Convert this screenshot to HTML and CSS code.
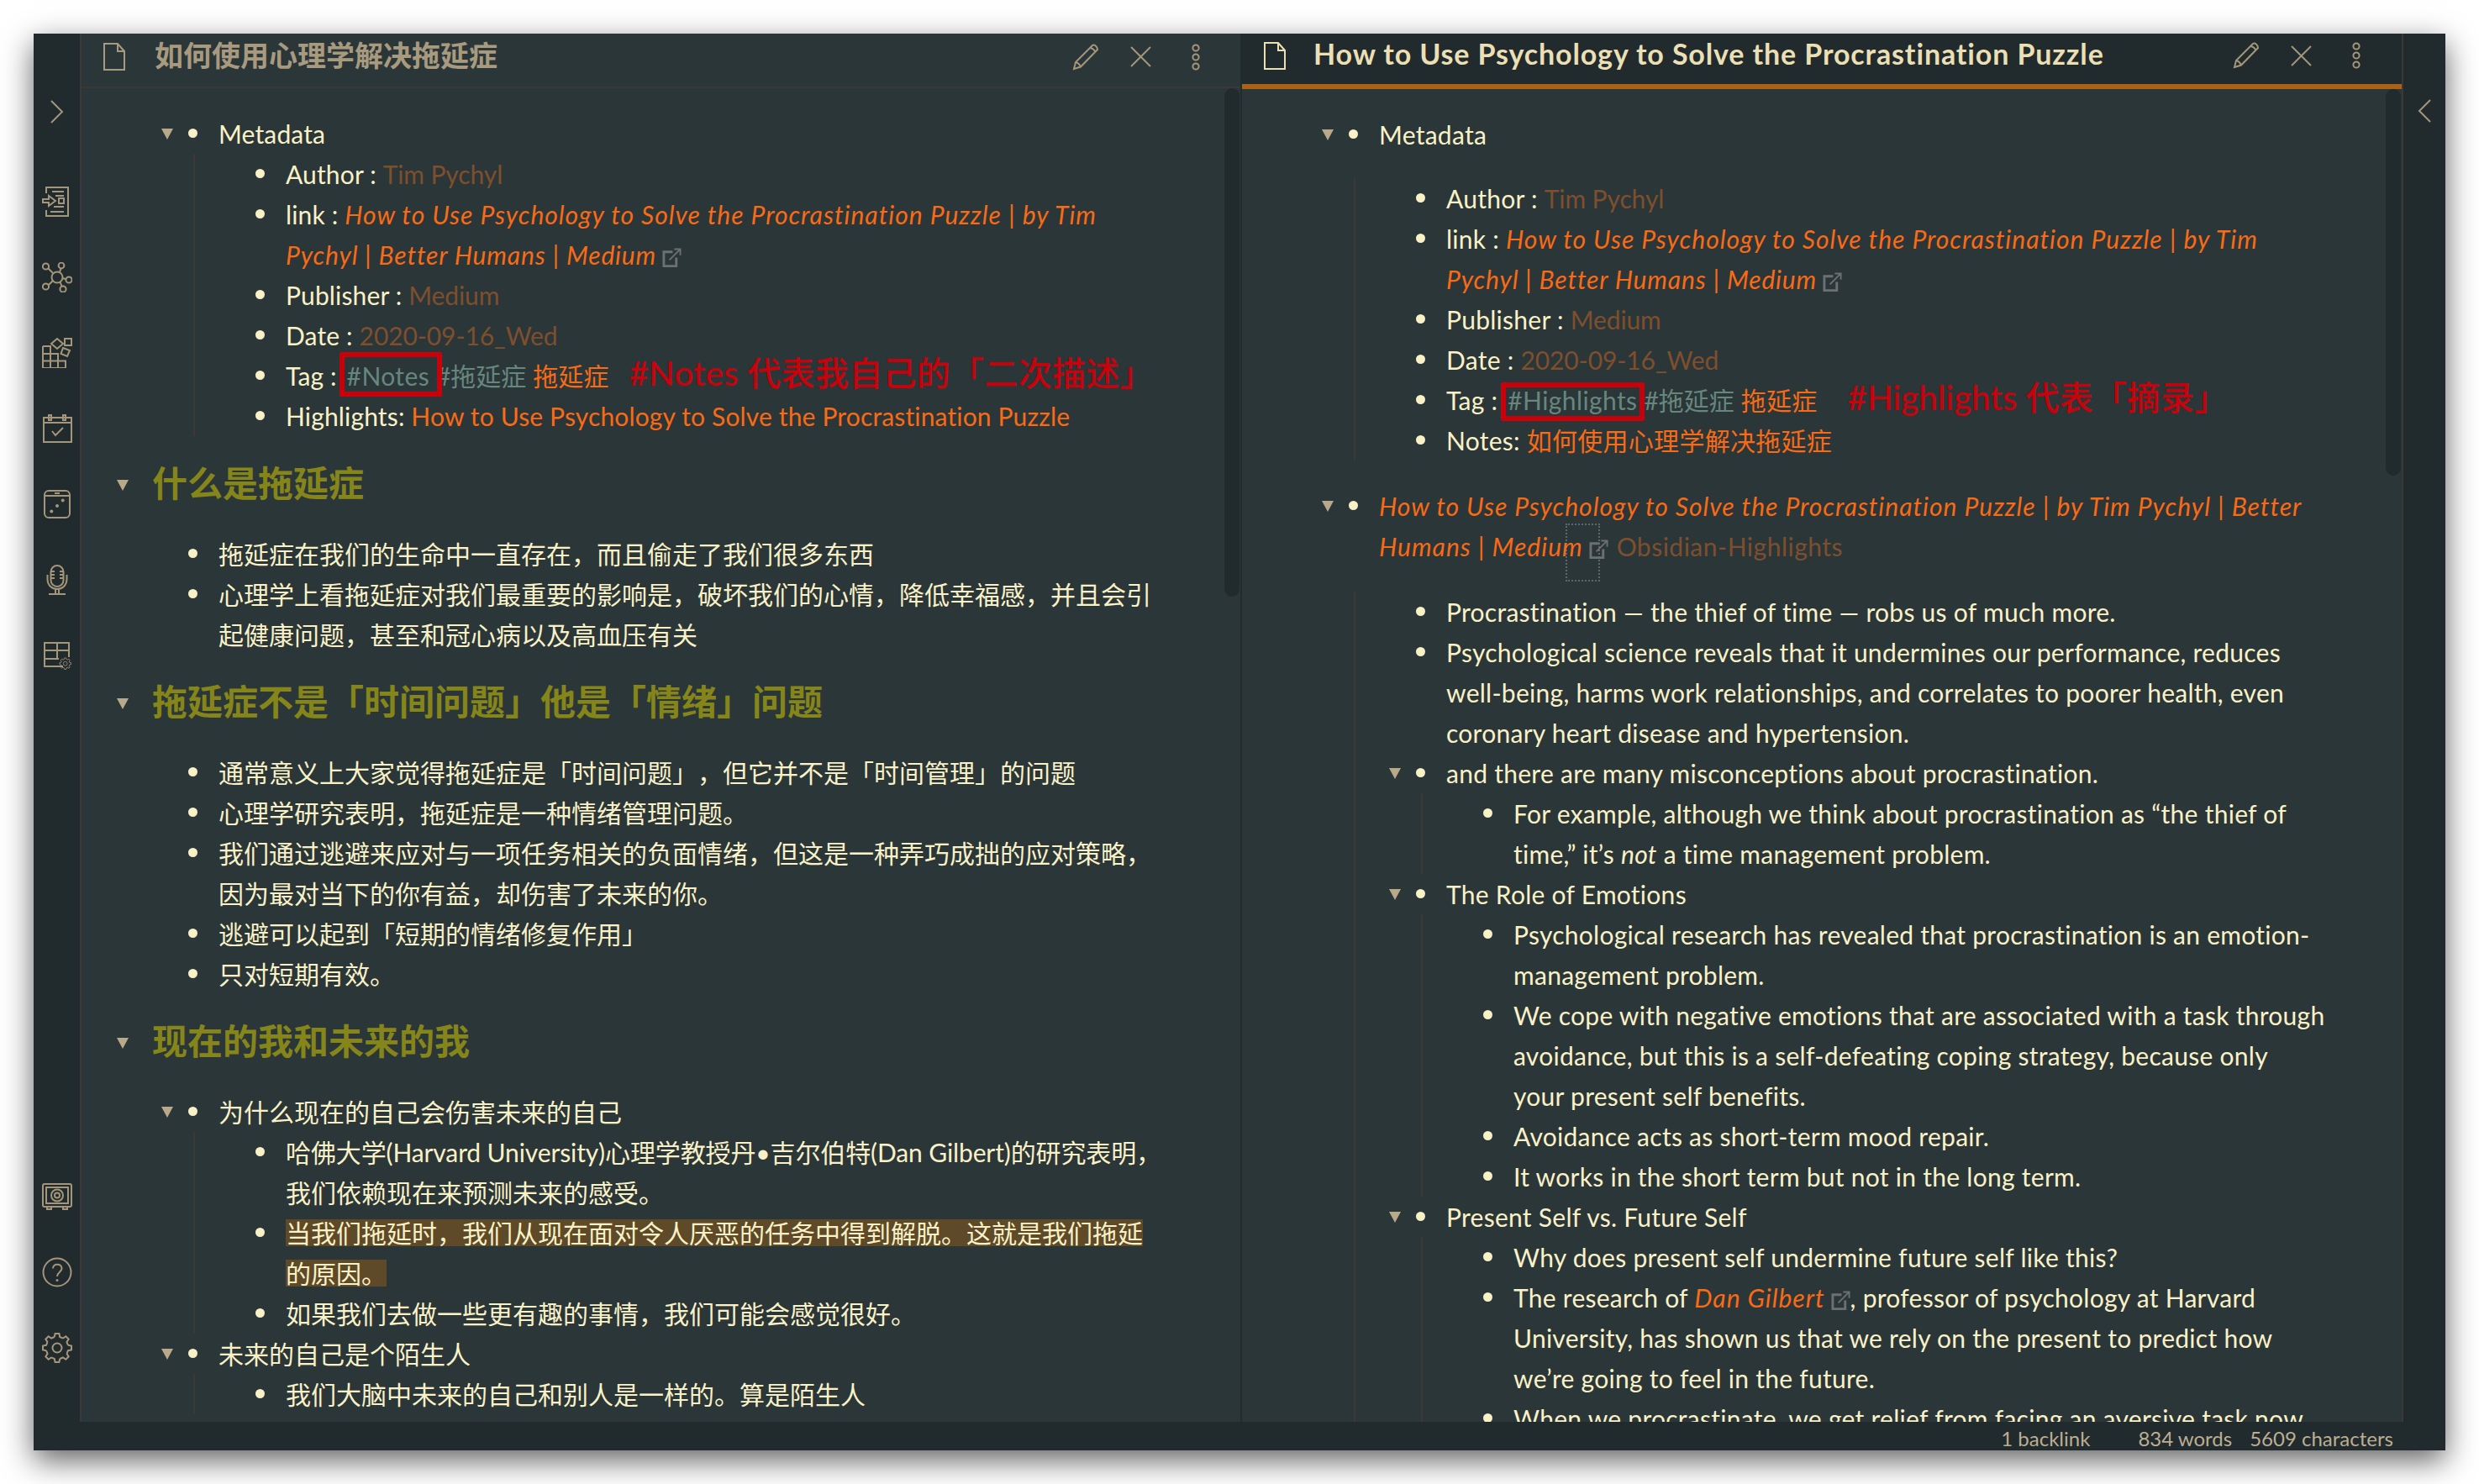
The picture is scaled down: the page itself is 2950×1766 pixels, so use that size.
FILE: index.html
```html
<!DOCTYPE html>
<html lang="zh">
<head>
<meta charset="utf-8">
<title>Obsidian</title>
<link rel="stylesheet" href="styles.css">
</head>
<body>
<svg class="defs" width="0" height="0">
  <defs>
    <path id="tooth" d="M14.8 5 15.6 1H20.4L21.2 5 24.93 6.55"/>
    <g id="gear">
      <use href="#tooth"/>
      <use href="#tooth" transform="rotate(45 18 18)"/>
      <use href="#tooth" transform="rotate(90 18 18)"/>
      <use href="#tooth" transform="rotate(135 18 18)"/>
      <use href="#tooth" transform="rotate(180 18 18)"/>
      <use href="#tooth" transform="rotate(225 18 18)"/>
      <use href="#tooth" transform="rotate(270 18 18)"/>
      <use href="#tooth" transform="rotate(315 18 18)"/>
    </g>
    <symbol id="i-doc" viewBox="0 0 26 33"><path d="M1 1H17L25 10V32H1ZM17 1V10H25"/></symbol>
    <symbol id="i-pencil" viewBox="0 0 32 32"><path d="M2 30 4 22 24 2C26 .5 30 3 30 7L10 27.5ZM4 22C6 22 9 25 10 27.5M21 5C24 5 27 8 27.5 10.5"/></symbol>
    <symbol id="i-x" viewBox="0 0 25 25"><path d="M1 1 24 24M24 1 1 24"/></symbol>
    <symbol id="i-dots" viewBox="0 0 10 32"><circle cx="5" cy="5" r="3.6"/><circle cx="5" cy="16" r="3.6"/><circle cx="5" cy="27" r="3.6"/></symbol>
    <symbol id="i-ext" viewBox="0 0 24 24"><path d="M13 5H2V22.5H17.5V12" stroke-width="3"/><path d="M9 15 22 2M15 1.5H22.5V9"/></symbol>
    <symbol id="i-right" viewBox="0 0 16 28"><path d="M1 1 14 14 1 27"/></symbol>
    <symbol id="i-left" viewBox="0 0 16 28"><path d="M15 1 2 14 15 27"/></symbol>
    <symbol id="i-outline" viewBox="0 0 36 36"><path d="M5 8V1H31V35H5V28M1 15H8V11L16 17 8 23V19H1ZM12 6H26M16 11H26M20 14H26V20H20ZM14 24H26M10 30H26"/></symbol>
    <symbol id="i-graph" viewBox="0 0 36 36"><circle cx="18" cy="18" r="6.5"/><circle cx="4.5" cy="5" r="3.6"/><circle cx="23" cy="4" r="3.4"/><circle cx="32" cy="21" r="3.6"/><circle cx="25" cy="32" r="3.6"/><circle cx="4.5" cy="29" r="3.6"/><path d="M7.5 7.5 13 13M21 12 22.5 7.5M24.5 19 28.5 20.3M21.5 23.5 23.5 28.5M13 22 8 27"/></symbol>
    <symbol id="i-blocks" viewBox="0 0 36 36"><path d="M1 10H10V36M1 19H19V36M1 27.500H28V36H1ZM1 10V36M10 19V36"/><path d="M18 1 25 7 18 13 11 7Z"/><path d="M27 1H35V9H27Z"/><path d="M25 12 33 15 30 22 22.500 19Z"/></symbol>
    <symbol id="i-cal" viewBox="0 0 36 36"><path d="M2 5H35V34H2ZM2 11H35M8 2H11V8H8ZM25 2H28V8H25ZM12 21 16 26 25 17"/></symbol>
    <symbol id="i-dice" viewBox="0 0 36 36"><rect x="3" y="2" width="30" height="32" rx="5"/><path d="M15 5H21M3 8H33"/><circle class="fill" cx="11.300" cy="26.600" r="2"/><circle class="fill" cx="18" cy="20" r="2"/><circle class="fill" cx="24.700" cy="13.500" r="2"/></symbol>
    <symbol id="i-mic" viewBox="0 0 36 36"><rect x="10.500" y="1" width="15" height="25" rx="7.500"/><path d="M6.500 12V17C6.500 33 29.500 33 29.500 17V12M10.500 8H15M10.500 12H15M10.500 16H15M21 8H25.500M21 12H25.500M21 16H25.500M16 29V34M20 29V34M8 35H28"/></symbol>
    <symbol id="i-tablegear" viewBox="0 0 36 36"><path d="M25 31H3V3H32V20M3 12H32M3 22H20M18 3V22"/><g transform="translate(20.500 20.500) scale(.4)"><use href="#gear"/><circle cx="18" cy="18" r="6"/></g></symbol>
    <symbol id="i-safe" viewBox="0 0 36 32"><rect x="1" y="1" width="34" height="27" rx="2"/><rect x="5" y="5" width="26" height="19"/><circle cx="18" cy="14.500" r="7"/><circle cx="18" cy="14.500" r="3"/><path d="M6 28V31H11V28M25 28V31H30V28"/></symbol>
    <symbol id="i-help" viewBox="0 0 36 36"><circle cx="18" cy="18" r="16.500"/><path d="M13 13.500C13 7 23.500 7 23.500 13.500 23.500 17.500 18 18 18 23"/><circle class="fill" cx="18" cy="27.500" r="1.500"/></symbol>
    <symbol id="i-gear" viewBox="0 0 36 36"><use href="#gear"/><circle cx="18" cy="18" r="5.500"/></symbol>
  </defs>
</svg>

<div class="window">
  <div class="workspace">
    <nav class="ribbon left-ribbon">
      <svg class="chevron"><use href="#i-right"/></svg>
      <div class="ribbon-group">
        <svg class="rib-icon"><use href="#i-outline"/></svg>
        <svg class="rib-icon"><use href="#i-graph"/></svg>
        <svg class="rib-icon"><use href="#i-blocks"/></svg>
        <svg class="rib-icon"><use href="#i-cal"/></svg>
        <svg class="rib-icon"><use href="#i-dice"/></svg>
        <svg class="rib-icon"><use href="#i-mic"/></svg>
        <svg class="rib-icon"><use href="#i-tablegear"/></svg>
      </div>
      <div class="ribbon-group bottom">
        <svg class="rib-icon"><use href="#i-safe"/></svg>
        <svg class="rib-icon"><use href="#i-help"/></svg>
        <svg class="rib-icon"><use href="#i-gear"/></svg>
      </div>
    </nav>

    <section class="pane pane-left">
      <header class="pane-head">
        <svg class="doc-icon"><use href="#i-doc"/></svg>
        <h1 class="pane-title">如何使用心理学解决拖延症</h1>
        <div class="actions">
          <svg class="a-pencil"><use href="#i-pencil"/></svg>
          <svg class="a-x"><use href="#i-x"/></svg>
          <svg class="a-dots"><use href="#i-dots"/></svg>
        </div>
      </header>
      <div class="view">
        <div class="scroll-thumb left-thumb"></div>
        <ul class="root en-soft">
          <li><span class="fold"></span>Metadata
            <ul>
              <li>Author : <span class="meta">Tim Pychyl</span></li>
              <li>link : <a class="ext">How to Use Psychology to Solve the Procrastination Puzzle | by Tim<br><span class="narrow">Pychyl | Better Humans | Medium</span></a><svg class="ext-icon"><use href="#i-ext"/></svg></li>
              <li>Publisher : <span class="meta">Medium</span></li>
              <li>Date : <span class="meta">2020-09-16_Wed</span></li>
              <li>Tag : <span class="tag boxed box-notes">#Notes</span> <span class="tag">#拖延症</span> <span class="int">拖延症</span><span class="note note-l">#Notes 代表我自己的「二次描述」</span></li>
              <li>Highlights: <span class="int">How to Use Psychology to Solve the Procrastination Puzzle</span></li>
            </ul>
          </li>
        </ul>
        <h2 class="head"><span class="fold"></span>什么是拖延症</h2>
        <ul class="root">
          <li>拖延症在我们的生命中一直存在，而且偷走了我们很多东西</li>
          <li>心理学上看拖延症对我们最重要的影响是，破坏我们的心情，降低幸福感，并且会引<br>起健康问题，甚至和冠心病以及高血压有关</li>
        </ul>
        <h2 class="head"><span class="fold"></span>拖延症不是「时间问题」他是「情绪」问题</h2>
        <ul class="root">
          <li>通常意义上大家觉得拖延症是「时间问题」，但它并不是「时间管理」的问题</li>
          <li>心理学研究表明，拖延症是一种情绪管理问题。</li>
          <li>我们通过逃避来应对与一项任务相关的负面情绪，但这是一种弄巧成拙的应对策略，<br>因为最对当下的你有益，却伤害了未来的你。</li>
          <li>逃避可以起到「短期的情绪修复作用」</li>
          <li>只对短期有效。</li>
        </ul>
        <h2 class="head"><span class="fold"></span>现在的我和未来的我</h2>
        <ul class="root">
          <li><span class="fold"></span>为什么现在的自己会伤害未来的自己
            <ul>
              <li><span class="tight">哈佛大学(Harvard University)心理学教授丹•吉尔伯特(Dan Gilbert)的研究表明，</span><br>我们依赖现在来预测未来的感受。</li>
              <li><mark>当我们拖延时，我们从现在面对令人厌恶的任务中得到解脱。这就是我们拖延</mark><br><mark>的原因。</mark></li>
              <li>如果我们去做一些更有趣的事情，我们可能会感觉很好。</li>
            </ul>
          </li>
          <li><span class="fold"></span>未来的自己是个陌生人
            <ul>
              <li>我们大脑中未来的自己和别人是一样的。算是陌生人</li>
            </ul>
          </li>
        </ul>
      </div>
    </section>

    <section class="pane pane-right">
      <header class="pane-head active">
        <svg class="doc-icon"><use href="#i-doc"/></svg>
        <h1 class="pane-title">How to Use Psychology to Solve the Procrastination Puzzle</h1>
        <div class="actions">
          <svg class="a-pencil"><use href="#i-pencil"/></svg>
          <svg class="a-x"><use href="#i-x"/></svg>
          <svg class="a-dots"><use href="#i-dots"/></svg>
        </div>
      </header>
      <div class="view">
        <div class="scroll-thumb right-thumb"></div>
        <div class="drag-box"></div>
        <ul class="root en">
          <li><span class="fold"></span>Metadata
            <ul class="loose">
              <li>Author : <span class="meta">Tim Pychyl</span></li>
              <li>link : <a class="ext">How to Use Psychology to Solve the Procrastination Puzzle | by Tim<br><span class="narrow">Pychyl | Better Humans | Medium</span></a><svg class="ext-icon"><use href="#i-ext"/></svg></li>
              <li>Publisher : <span class="meta">Medium</span></li>
              <li>Date : <span class="meta">2020-09-16_Wed</span></li>
              <li>Tag : <span class="tag boxed box-high">#Highlights</span> <span class="tag">#拖延症</span> <span class="int">拖延症</span><span class="note note-r">#Highlights 代表「摘录」</span></li>
              <li>Notes: <span class="int">如何使用心理学解决拖延症</span></li>
            </ul>
          </li>
          <li><span class="fold"></span><a class="ext">How to Use Psychology to Solve the Procrastination Puzzle | by Tim Pychyl | Better<br>Humans | Medium</a><svg class="ext-icon"><use href="#i-ext"/></svg><span class="meta source">Obsidian-Highlights</span>
            <ul class="loose last">
              <li>Procrastination — the thief of time — robs us of much more.</li>
              <li>Psychological science reveals that it undermines our performance, reduces<br>well-being, harms work relationships, and correlates to poorer health, even<br>coronary heart disease and hypertension.</li>
              <li><span class="fold"></span>and there are many misconceptions about procrastination.
                <ul>
                  <li>For example, although we think about procrastination as “the thief of<br>time,” it’s <em>not</em> a time management problem.</li>
                </ul>
              </li>
              <li><span class="fold"></span>The Role of Emotions
                <ul>
                  <li>Psychological research has revealed that procrastination is an emotion-<br>management problem.</li>
                  <li>We cope with negative emotions that are associated with a task through<br>avoidance, but this is a self-defeating coping strategy, because only<br>your present self benefits.</li>
                  <li>Avoidance acts as short-term mood repair.</li>
                  <li>It works in the short term but not in the long term.</li>
                </ul>
              </li>
              <li><span class="fold"></span>Present Self vs. Future Self
                <ul>
                  <li>Why does present self undermine future self like this?</li>
                  <li>The research of <a class="ext">Dan Gilbert</a><svg class="ext-icon"><use href="#i-ext"/></svg>, professor of psychology at Harvard<br>University, has shown us that we rely on the present to predict how<br>we’re going to feel in the future.</li>
                  <li>When we procrastinate, we get relief from facing an aversive task now,</li>
                </ul>
              </li>
            </ul>
          </li>
        </ul>
      </div>
    </section>

    <nav class="ribbon right-ribbon">
      <svg class="chevron"><use href="#i-left"/></svg>
    </nav>
  </div>
  <footer class="status">
    <span class="backlinks">1 backlink</span>
    <span>834 words</span>
    <span>5609 characters</span>
  </footer>
</div>
</body>
</html>
```

FILE: styles.css
```css
* { box-sizing: border-box; }
html, body { margin: 0; height: 100%; background: #fff; }
body {
  padding: 40px 40px 40px;
  font-family: Lato, "Noto Sans CJK SC", sans-serif;
  font-size: 30px;
  line-height: 48px;
  color: #fbf1c7;
  overflow: hidden;
  text-spacing-trim: space-all;
}
.defs { position: absolute; }
svg { fill: none; stroke: #a3967b; stroke-width: 2; display: block; overflow: visible; }
svg .fill { fill: #a3967b; stroke: none; }

.window {
  height: 1686px;
  display: flex;
  flex-direction: column;
  background: #212a2c;
  box-shadow: 0 12px 34px rgba(0, 0, 0, .62);
}
.workspace { flex: 1; min-height: 0; display: flex; }

.ribbon { flex: none; display: flex; flex-direction: column; align-items: center; }
.left-ribbon { width: 57px; border-right: 2px solid #3d3836; padding: 79px 0 43px; }
.right-ribbon { width: 52px; border-left: 2px solid #3d3836; padding-top: 78px; }
.chevron { width: 16px; height: 28px; flex: none; }
.ribbon-group { display: flex; flex-direction: column; margin-top: 48px; }
.ribbon-group.bottom { margin-top: auto; }
.rib-icon { width: 36px; height: 36px; margin: 27px 0; }

.pane { width: 1381px; flex: none; display: flex; flex-direction: column; min-width: 0; background: #2b3639; }
.pane-left { border-right: 2px solid #232b2d; }
.pane-right { width: 1380px; }

.pane-head {
  flex: none;
  height: 65px;
  display: flex;
  align-items: center;
  padding: 0 0 8px 26px;
  border-bottom: 2px solid #3d3836;
}
.pane-head.active {
  height: 66px;
  background: #212a2c;
  border-bottom: 6px solid #a86414;
  padding-bottom: 8px;
}
.doc-icon { width: 26px; height: 33px; flex: none; stroke: #a89a7e; }
.active .doc-icon { stroke: #ebdfb4; }
.pane-title {
  margin: -4px 0 0 35px;
  font-size: 34px;
  font-weight: 700;
  line-height: 48px;
  color: #a89a7e;
  white-space: nowrap;
}
.active .pane-title { color: #ebdfb4; margin-left: 33px; letter-spacing: .87px; }
.actions { margin-left: auto; display: flex; align-items: center; padding-right: 48px; }
.a-pencil { width: 32px; height: 32px; }
.a-x { width: 25px; height: 25px; margin-left: 37px; }
.a-dots { width: 10px; height: 32px; margin-left: 48px; }
.active .actions { padding-right: 49px; }

.view {
  flex: 1;
  min-height: 0;
  position: relative;
  overflow: hidden;
  padding-top: 30px;
  white-space: nowrap;
}
.scroll-thumb {
  position: absolute;
  right: 1px;
  top: 0;
  width: 18px;
  background: #212a2c;
  border-radius: 9px;
}
.left-thumb { height: 605px; }
.right-thumb { height: 460px; }
.drag-box {
  position: absolute;
  left: 385px;
  top: 517px;
  width: 41px;
  height: 69px;
  border: 2px dotted #5f6668;
}

ul { list-style: none; margin: 0; padding: 0; }
.root { padding-left: 163px; }
.en-soft { letter-spacing: .15px; }
.en { letter-spacing: .27px; }
.tight { letter-spacing: -.12px; }
li { position: relative; }
li::before {
  content: "";
  position: absolute;
  left: -36px;
  top: 18px;
  width: 11px;
  height: 11px;
  border-radius: 50%;
  background: #fbf1c7;
}
li ul { margin-left: -30px; padding-left: 108px; border-left: 2px solid #3d3836; }
.loose { margin-top: 28px; margin-bottom: 30px; }
.loose.last { margin-top: 30px; margin-bottom: 0; }

.fold {
  position: absolute;
  left: -68px;
  top: 18px;
  width: 0;
  height: 0;
  border-left: 7.5px solid transparent;
  border-right: 7.5px solid transparent;
  border-top: 13px solid #b7a98a;
}

.head {
  position: relative;
  margin: 28px 0 32px 84px;
  font-size: 42px;
  font-weight: 700;
  line-height: 56px;
  color: #85851a;
}
.head .fold { left: -42px; top: 24px; }

.ext { color: #fb6a14; font-style: italic; letter-spacing: 1px; }
.narrow { letter-spacing: .85px; }
.int { color: #fb6a14; }
.meta { color: #7e4f2d; letter-spacing: -.1px; }
.source { margin-left: 10px; letter-spacing: .5px; }
.tag { color: #67877d; letter-spacing: 0; }
.boxed { position: relative; margin-left: 4px; letter-spacing: .4px; }
.boxed::after {
  content: "";
  position: absolute;
  border: 6px solid #c8000b;
  border-radius: 2px;
}
.box-notes::after { left: -9px; right: -15px; top: -10px; bottom: -7px; }
.box-high::after { left: -8px; right: -9px; top: -3px; bottom: -7px; }
.note { margin-left: 24px; font-size: 40px; font-weight: 500; line-height: 0; color: #c8000b; letter-spacing: .3px; }
.note-r { margin-left: 36px; letter-spacing: .1px; }
.ext-icon { display: inline-block; width: 23px; height: 23px; margin: 0 0 -3px 7px; stroke: #6d7071; stroke-width: 2; }
mark {
  color: inherit;
  background: linear-gradient(transparent 2px, #5e4a28 2px, #5e4a28 calc(100% - 2px), transparent calc(100% - 2px));
}

.status {
  flex: none;
  height: 34px;
  display: flex;
  justify-content: flex-end;
  align-items: center;
  gap: 21px;
  padding: 5px 62px 0 0;
  font-size: 24px;
  line-height: 29px;
  color: #bdae93;
}
.backlinks { margin-right: 36px; }
```
